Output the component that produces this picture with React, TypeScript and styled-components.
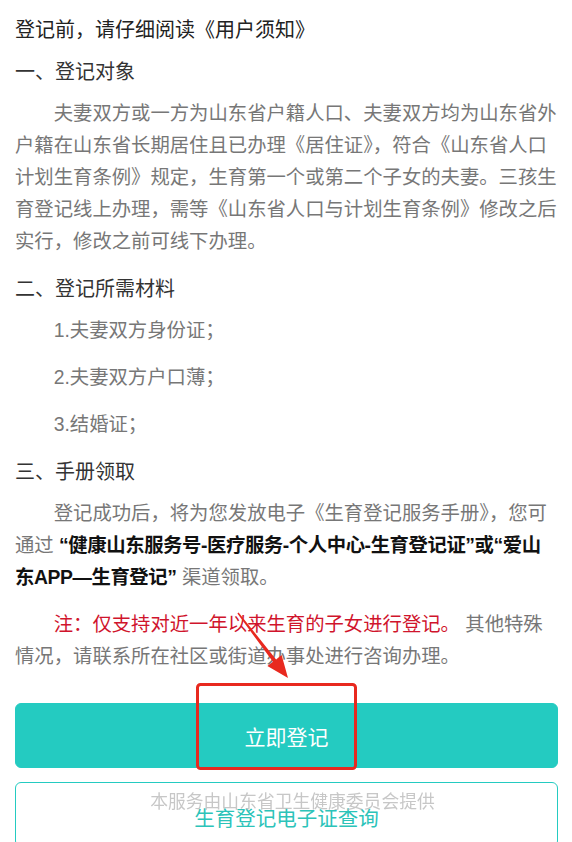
import React from "react";
import styled, { createGlobalStyle } from "styled-components";

// colours taken from the screenshot
const C = {
  teal: "#24cbc1",
  tealText: "#2cc3b9",
  title: "#222",
  heading: "#333",
  body: "#777",
  bold: "#111",
  warn: "#d0142c",
  mark: "#e8291f",
};

const GlobalStyle = createGlobalStyle`
  html, body {
    margin: 0;
    padding: 0;
    background: #fff;
  }
  body {
    font-family: "Liberation Sans", "Noto Sans CJK SC", sans-serif;
    -webkit-font-smoothing: antialiased;
  }
`;

const Page = styled.div`
  position: relative;
  width: 572px;
  height: 842px;
  overflow: hidden;
  box-sizing: border-box;
  padding: 14px 14px 0 15px;
`;

const Title = styled.h1`
  margin: 0;
  font-size: 20px;
  line-height: 32px;
  font-weight: normal;
  color: ${C.title};
`;

const Section = styled.section`
  margin-top: 16px;
  &:first-of-type {
    margin-top: 10px;
  }
`;

const Heading = styled.h2`
  margin: 0 0 9px;
  font-size: 20px;
  line-height: 32px;
  font-weight: normal;
  color: ${C.heading};
`;

// paragraphs that follow each other are spaced by 15px
const Para = styled.p<{ $indent?: boolean }>`
  margin: 0;
  font-size: 19.35px;
  line-height: 32px;
  color: ${C.body};
  text-indent: ${(p) => (p.$indent ? "2em" : "0")};
  & + & {
    margin-top: 15px;
  }
`;

const Strong = styled.b`
  color: ${C.bold};
  font-weight: bold;
  letter-spacing: -0.4px;
`;

const Warn = styled.span`
  color: ${C.warn};
`;

const Buttons = styled.div`
  margin-top: 31px;
  display: flex;
  flex-direction: column;
  gap: 14px;
`;

const Btn = styled.button<{ $outline?: boolean }>`
  width: 100%;
  height: 65px;
  border-radius: 6px;
  font-family: inherit;
  cursor: pointer;
  border: 1px solid ${C.teal};
  background: ${(p) => (p.$outline ? "#fff" : C.teal)};
  color: ${(p) => (p.$outline ? C.tealText : "#fff")};
  font-size: ${(p) => (p.$outline ? "20.5px" : "21px")};
  padding: ${(p) => (p.$outline ? "4px 0 0" : "0")};
`;

const FooterNote = styled.div`
  position: fixed;
  left: 0;
  right: 0;
  bottom: 29px;
  padding-left: 13px;
  text-align: center;
  font-size: 17.8px;
  line-height: 22px;
  color: rgba(180, 180, 180, 0.75);
  pointer-events: none;
`;

// red annotation drawn on top of the screenshot
const Marks = styled.svg`
  position: absolute;
  left: 0;
  top: 0;
  width: 572px;
  height: 842px;
  pointer-events: none;
`;

const materials = ["1.夫妻双方身份证；", "2.夫妻双方户口薄；", "3.结婚证；"];

export default function App() {
  return (
    <>
      <GlobalStyle />
      <Page>
        <Title>登记前，请仔细阅读《用户须知》</Title>

        <Section>
          <Heading>一、登记对象</Heading>
          <Para $indent>
            夫妻双方或一方为山东省户籍人口、夫妻双方均为山东省外户籍在山东省长期居住且已办理《居住证》，符合《山东省人口计划生育条例》规定，生育第一个或第二个子女的夫妻。三孩生育登记线上办理，需等《山东省人口与计划生育条例》修改之后实行，修改之前可线下办理。
          </Para>
        </Section>

        <Section>
          <Heading>二、登记所需材料</Heading>
          {materials.map((m) => (
            <Para key={m} $indent>
              {m}
            </Para>
          ))}
        </Section>

        <Section>
          <Heading>三、手册领取</Heading>
          <Para $indent>
            登记成功后，将为您发放电子《生育登记服务手册》，您可通过{" "}
            <Strong>“健康山东服务号-医疗服务-个人中心-生育登记证”或“爱山东APP—生育登记”</Strong>{" "}
            渠道领取。
          </Para>
          <Para $indent>
            <Warn>注：仅支持对近一年以来生育的子女进行登记。</Warn> 其他特殊情况，请联系所在社区或街道办事处进行咨询办理。
          </Para>
        </Section>

        <Buttons>
          <Btn>立即登记</Btn>
          <Btn $outline>生育登记电子证查询</Btn>
        </Buttons>

        <FooterNote>本服务由山东省卫生健康委员会提供</FooterNote>

        <Marks viewBox="0 0 572 842">
          <rect x="197.5" y="684.5" width="158" height="84" rx="3" fill="none" stroke={C.mark} strokeWidth="3" />
          <polygon
            fill={C.mark}
            points="237.4,613.5 238.6,612.5 276.1,659.4 281.6,655.1 288,678 267.4,666.1 272.9,661.8"
          />
        </Marks>
      </Page>
    </>
  );
}
